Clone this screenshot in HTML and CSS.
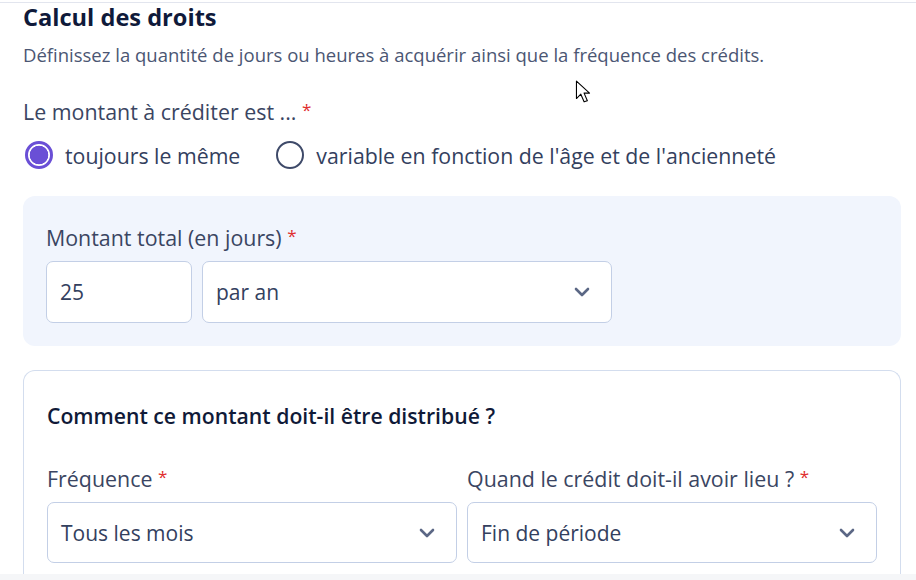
FILE: index.html
```html
<!DOCTYPE html>
<html lang="fr">
<head>
<meta charset="utf-8">
<link rel="stylesheet" href="styles.css">
</head>
<body>
<div class="topline"></div>
<main class="page">
  <h1 class="title">Calcul des droits</h1>
  <p class="desc">Définissez la quantité de jours ou heures à acquérir ainsi que la fréquence des crédits.</p>
  <div class="question">
    <div class="label">Le montant à créditer est ... <span class="req">*</span></div>
    <div class="radios">
      <label class="radio"><span class="dot checked"></span><span>toujours le même</span></label>
      <label class="radio"><span class="dot"></span><span>variable en fonction de l'âge et de l'ancienneté</span></label>
    </div>
  </div>
  <section class="panel">
    <div class="label">Montant total (en jours) <span class="req">*</span></div>
    <div class="row">
      <div class="box num">25</div>
      <div class="box select w410"><span>par an</span><svg class="chev" viewBox="0 0 16 10" width="16" height="10"><path d="M2 2l6 6 6-6" fill="none" stroke="#5b6785" stroke-width="2.6" stroke-linecap="round" stroke-linejoin="round"/></svg></div>
    </div>
  </section>
  <section class="card">
    <h2 class="subtitle">Comment ce montant doit-il être distribué ?</h2>
    <div class="grid">
      <div class="col">
        <div class="label">Fréquence <span class="req">*</span></div>
        <div class="box select"><span>Tous les mois</span><svg class="chev" viewBox="0 0 16 10" width="16" height="10"><path d="M2 2l6 6 6-6" fill="none" stroke="#5b6785" stroke-width="2.6" stroke-linecap="round" stroke-linejoin="round"/></svg></div>
      </div>
      <div class="col">
        <div class="label">Quand le crédit doit-il avoir lieu ? <span class="req">*</span></div>
        <div class="box select"><span>Fin de période</span><svg class="chev" viewBox="0 0 16 10" width="16" height="10"><path d="M2 2l6 6 6-6" fill="none" stroke="#5b6785" stroke-width="2.6" stroke-linecap="round" stroke-linejoin="round"/></svg></div>
      </div>
    </div>
  </section>
</main>
<svg class="cursor" viewBox="0 0 14 22" width="16" height="24"><path d="M1 1 L1 17 L5 13 L8 20 L11 19 L8 12 L13 12 Z" fill="#fff" stroke="#000" stroke-width="1" stroke-linejoin="round"/></svg>
<div class="bottombar"></div>
</body>
</html>
```

FILE: styles.css
```css
html, body {
  margin: 0;
  padding: 0;
  background: #ffffff;
  height: 580px;
  overflow: hidden;
}
body {
  font-family: "Open Sans", "Noto Sans", sans-serif;
  color: #36425e;
  position: relative;
}
.topline {
  height: 1px;
  margin-top: 2px;
  background: #e2e5ee;
}
.page {
  padding: 0 15px 0 23px;
  width: 878px;
}
.title {
  margin: 0;
  font-size: 23.6px;
  font-weight: 700;
  line-height: 28px;
  color: #0f1a3a;
}
.desc {
  margin: 11px 0 0;
  font-size: 18.5px;
  line-height: 26px;
  color: #4b5673;
  white-space: nowrap;
}
.question {
  margin-top: 30px;
}
.label {
  font-size: 21.4px;
  line-height: 28px;
  height: 28px;
  color: #3a4562;
  white-space: nowrap;
}
.req {
  color: #e02d2d;
  font-size: 17px;
  line-height: 0;
  vertical-align: 4px;
}
.radios {
  display: flex;
  gap: 36px;
  margin-top: 14px;
  padding-left: 2px;
}
.radio {
  display: flex;
  align-items: center;
  gap: 12px;
  height: 30px;
  font-size: 21.3px;
  color: #33405e;
}
.dot {
  box-sizing: border-box;
  width: 28px;
  height: 28px;
  border-radius: 50%;
  border: 2.5px solid #3e4a69;
  background: #fff;
}
.dot.checked {
  border: 3px solid #6a4fd6;
  background: radial-gradient(circle, #6a4fd6 0 9px, #fff 9.6px);
}
.panel {
  margin-top: 26px;
  background: #f1f5fd;
  border-radius: 12px;
  padding: 28px 23px 23px;
}
.row {
  display: flex;
  gap: 10px;
  margin-top: 9px;
}
.box {
  box-sizing: border-box;
  height: 62px;
  border: 1.5px solid #c3cfe6;
  border-radius: 7px;
  background: #fff;
  display: flex;
  align-items: center;
  padding: 0 13px;
  font-size: 21px;
  color: #33405e;
}
.num {
  width: 146px;
}
.select {
  justify-content: space-between;
  padding-right: 21px;
}
.w410 {
  width: 410px;
}
.card {
  margin-top: 24px;
  border: 1px solid #d3ddee;
  border-bottom: none;
  border-radius: 12px 12px 0 0;
  padding: 31px 23px 20px;
  height: 200px;
}
.subtitle {
  margin: 0;
  font-size: 21.2px;
  line-height: 28px;
  font-weight: 600;
  color: #101a38;
  white-space: nowrap;
}
.grid {
  display: grid;
  grid-template-columns: 410px 410px;
  gap: 10px;
  margin-top: 35px;
}
.col .label {
  margin-bottom: 9px;
}
.col .box {
  height: 61px;
}
.cursor {
  position: absolute;
  left: 575px;
  top: 80px;
}
.bottombar {
  position: absolute;
  left: 0;
  right: 0;
  top: 574px;
  height: 6px;
  background: #f5f6f8;
}
```
